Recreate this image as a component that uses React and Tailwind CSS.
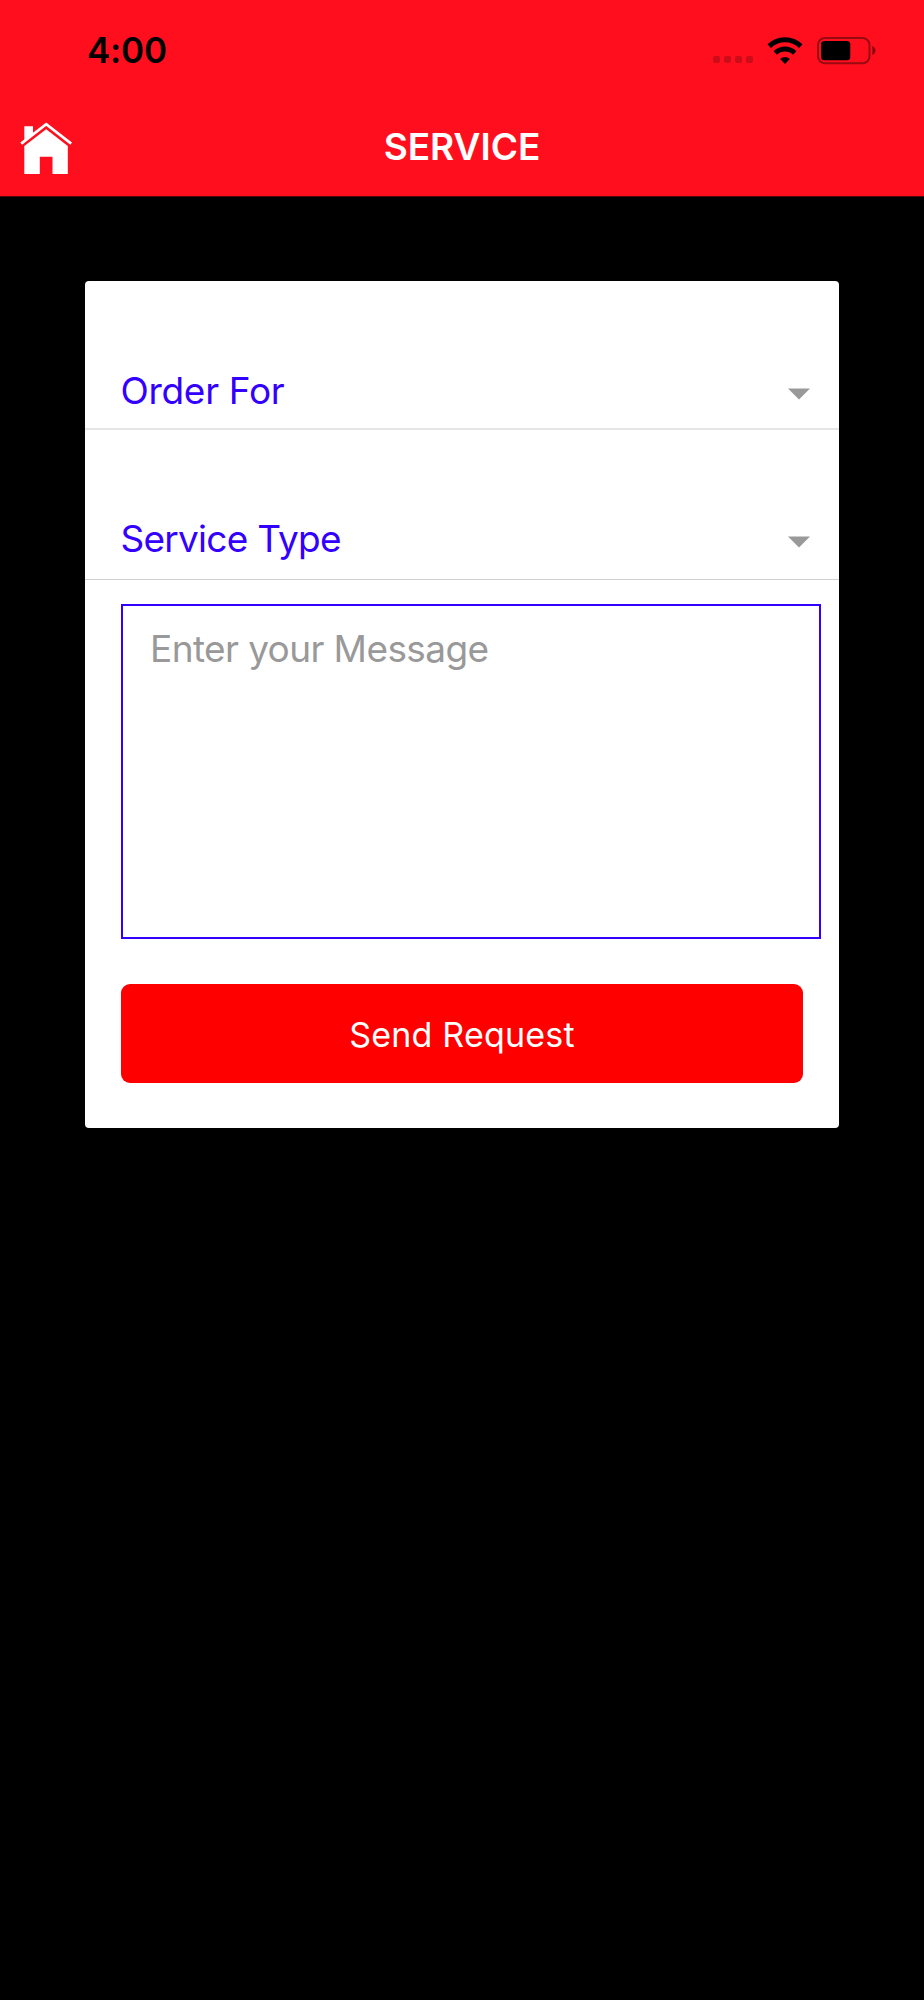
import { useState } from 'react'

function HomeIcon() {
	return (
		<svg width="52" height="54" viewBox="0 0 52 54" fill="none">
			<path d="M4.3 4.3H13V11.5L4.3 18.5Z" fill="#fff"/>
			<path d="M1.2 21.6L26.2 2.2L51.2 21.6" stroke="#fff" strokeWidth="2.8"/>
			<path d="M26.2 7.2L47.8 24V52H32.5V34.8H19.8V52H4.3V24Z" fill="#fff"/>
		</svg>
	)
}

function WifiIcon() {
	return (
		<svg width="36" height="27" viewBox="0 0 36 27" fill="none" stroke="#000">
			<path d="M2.2 9.1A22.8 22.8 0 0 1 33.8 9.1" strokeWidth="5"/>
			<path d="M8.3 15.9A14 14 0 0 1 27.7 15.9" strokeWidth="4.8"/>
			<path d="M18 27L13.2 22A7 7 0 0 1 22.8 22Z" fill="#000" stroke="none"/>
		</svg>
	)
}

function BatteryIcon() {
	return (
		<svg width="60" height="28" viewBox="0 0 60 28" fill="none">
			<rect x="1" y="1" width="51.5" height="25.3" rx="7" stroke="#000" strokeOpacity="0.4" strokeWidth="2"/>
			<rect x="4" y="4" width="29.3" height="19.3" rx="3.5" fill="#000"/>
			<path d="M55.3 9C59.6 10.8 59.6 16.4 55.3 18.2Z" fill="#000" fillOpacity="0.45"/>
		</svg>
	)
}

function StatusBar() {
	return (
		<div className="flex h-[101px] items-center justify-between pr-[47px] pl-[87px]">
			<span className="text-[35px] leading-none font-semibold tracking-[-0.2px] text-black">4:00</span>
			<div className="flex items-center">
				<div className="mt-[17px] mr-3.5 flex gap-1">
					<span className="size-[7px] rounded-[2px] bg-black/20"/>
					<span className="size-[7px] rounded-[2px] bg-black/20"/>
					<span className="size-[7px] rounded-[2px] bg-black/20"/>
					<span className="size-[7px] rounded-[2px] bg-black/20"/>
				</div>
				<WifiIcon/>
				<div className="ml-3.5">
					<BatteryIcon/>
				</div>
			</div>
		</div>
	)
}

function SelectRow({ label, className }) {
	return (
		<button type="button" className={`flex w-full items-end justify-between pr-[29px] pl-[35.5px] ${className}`}>
			<span className="text-[37px] leading-[44px] text-[#3300ff]">{label}</span>
			<svg className="mb-[13px]" width="22" height="12" viewBox="0 0 22 12">
				<path d="M0 0.4H22L11 11.6Z" fill="#999"/>
			</svg>
		</button>
	)
}

export default function App() {
	const [message, setMessage] = useState('')

	return (
		<div className="h-[2000px] w-[924px] bg-black font-['Inter',sans-serif]">
			<header className="h-[197px] border-b border-[#50060b] bg-[#ff0f1e]">
				<StatusBar/>
				<div className="grid h-[91px] grid-cols-[1fr_auto_1fr] items-center px-5">
					<div className="pt-1">
						<HomeIcon/>
					</div>
					<h1 className="text-[37px] leading-[44px] font-semibold text-white">SERVICE</h1>
				</div>
			</header>
			<main className="px-[85px] pt-[84px]">
				<div className="h-[847px] rounded bg-white">
					<SelectRow label="Order For" className="h-[149px] border-b-2 border-[#e6e6e6] pb-[15px] tracking-[-0.3px]"/>
					<SelectRow label="Service Type" className="h-[150px] border-b border-[#d0d0d0] pb-[18px] tracking-[-0.75px]"/>
					<form className="flex flex-col pt-6 pr-[18px] pl-9" onSubmit={(e) => e.preventDefault()}>
						<textarea
							className="h-[335px] w-full resize-none border-2 border-[#3300ff] px-[27px] py-[21px] text-[37px] leading-[44px] tracking-[-0.6px] placeholder:text-[#999] focus:outline-none"
							placeholder="Enter your Message"
							value={message}
							onChange={(e) => setMessage(e.target.value)}
						/>
						<button
							type="submit"
							className="mt-[45px] mr-[18px] h-[99px] rounded-[9px] bg-[#ff0000] pt-px text-[34px] tracking-[0.2px] text-white"
						>
							Send Request
						</button>
					</form>
				</div>
			</main>
		</div>
	)
}
